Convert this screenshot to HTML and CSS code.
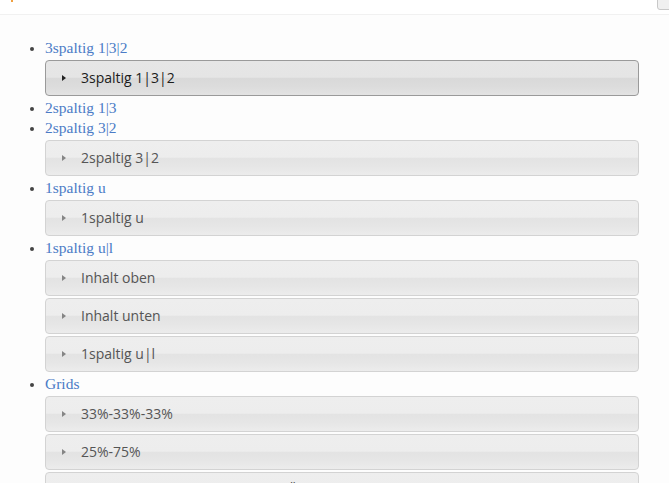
FILE: index.html
```html
<!DOCTYPE html>
<html lang="de">
<head>
<meta charset="utf-8">
<title>Layouts</title>
<link rel="stylesheet" href="styles.css">
</head>
<body>
<div class="topbar">
  <span class="topmark"></span>
  <span class="topbox"></span>
</div>
<div class="content">
  <ul class="tree">
    <li><a class="link" href="#">3spaltig 1|3|2</a>
      <div class="acc-head active"><span class="tri"></span>3spaltig 1|3|2</div>
    </li>
    <li><a class="link" href="#">2spaltig 1|3</a></li>
    <li><a class="link" href="#">2spaltig 3|2</a>
      <div class="acc-head"><span class="tri"></span>2spaltig 3|2</div>
    </li>
    <li><a class="link" href="#">1spaltig u</a>
      <div class="acc-head"><span class="tri"></span>1spaltig u</div>
    </li>
    <li><a class="link" href="#">1spaltig u|l</a>
      <div class="acc-head"><span class="tri"></span>Inhalt oben</div>
      <div class="acc-head"><span class="tri"></span>Inhalt unten</div>
      <div class="acc-head"><span class="tri"></span>1spaltig u|l</div>
    </li>
    <li><a class="link" href="#">Grids</a>
      <div class="acc-head"><span class="tri"></span>33%-33%-33%</div>
      <div class="acc-head"><span class="tri"></span>25%-75%</div>
      <div class="acc-head"><span class="tri"></span>Verschachtelte Grids 100% und Überschrift</div>
    </li>
  </ul>
</div>
</body>
</html>
```
FILE: styles.css
```css
html, body {
  margin: 0;
  padding: 0;
  background: #fdfdfd;
}
body {
  font-family: "Liberation Serif", serif;
  overflow: hidden;
  height: 483px;
}
.topbar {
  height: 14px;
  border-bottom: 1px solid #f1f1f1;
  background: #ffffff;
  position: relative;
}
.topmark {
  position: absolute;
  left: 11px;
  top: 0;
  width: 2px;
  height: 2px;
  background: #f0a040;
}
.topbox {
  position: absolute;
  right: -10px;
  top: -10px;
  width: 20px;
  height: 18px;
  border: 1px solid #c8c8c8;
  border-radius: 3px;
  background: #f0f0f0;
}
.content {
  padding: 23px 30px 0 0;
}
.tree {
  margin: 0;
  padding: 0 0 0 45px;
  list-style: disc;
  color: #444;
}
.tree li {
  line-height: 20px;
  font-size: 15px;
}
.tree li::marker {
  color: #444;
  font-size: 15px;
}
.link {
  color: #4b7bc6;
  text-decoration: none;
  font-family: "Liberation Serif", serif;
  font-size: 15.5px;
}
.acc-head {
  margin: 2px 0 2px;
  height: 34px;
  box-sizing: content-box;
  border: 1px solid #d3d3d3;
  border-radius: 4px;
  display: flex;
  align-items: center;
  padding-left: 16px;
  font-family: "Open Sans", sans-serif;
  font-size: 14px;
  line-height: 20px;
  color: #555;
  white-space: nowrap;
  overflow: hidden;
  background: linear-gradient(to bottom, #eeeeee 0%, #ededed 48%, #e3e3e3 50%, #e6e6e6 75%, #ececec 100%);
}
.acc-head.active {
  border-color: #9a9a9a;
  color: #1c1c1c;
  background: linear-gradient(to bottom, #e6e6e6 0%, #e5e5e5 48%, #d9d9d9 50%, #dcdcdc 75%, #e3e3e3 100%);
}
.tri {
  flex: none;
  width: 0;
  height: 0;
  border-top: 3.5px solid transparent;
  border-bottom: 3.5px solid transparent;
  border-left: 4px solid #858585;
  margin-right: 15px;
}
.acc-head.active .tri {
  border-left-color: #222;
}
```
